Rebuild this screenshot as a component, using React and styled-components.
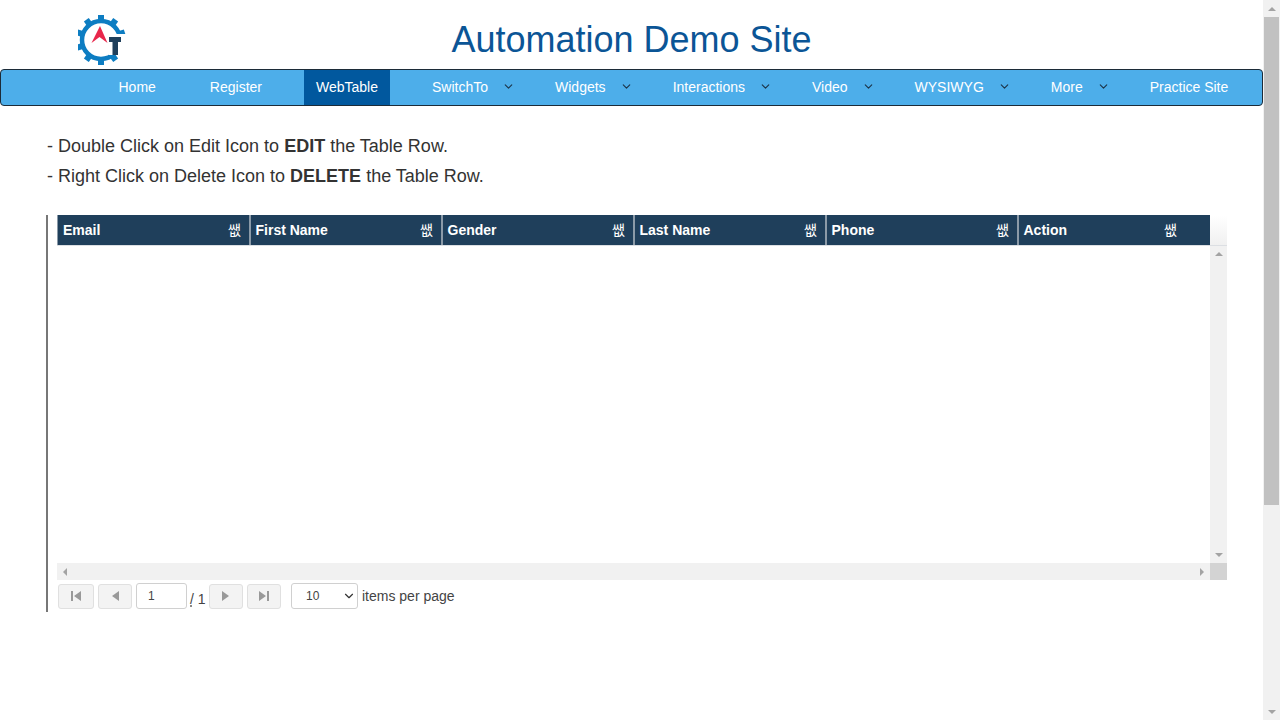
import React from "react";
import styled, { createGlobalStyle } from "styled-components";
import { ChevronDown } from "lucide-react";

const GlobalStyle = createGlobalStyle`
  html, body {
    margin: 0;
    padding: 0;
    height: 100%;
    overflow: hidden;
    background: #fff;
    font-family: "Liberation Sans", Arial, sans-serif;
  }
`;

const Shell = styled.div`
  display: flex;
  width: 1280px;
  height: 720px;
`;

const Page = styled.div`
  width: 1263px;
  flex-shrink: 0;
`;

const Masthead = styled.header`
  display: flex;
  height: 69px;
`;

const LogoBox = styled.div`
  width: 78px;
  padding-top: 14px;
  margin-left: 78px;
  margin-right: -156px;
`;

const SiteTitle = styled.h1`
  flex: 1;
  margin: 0;
  text-align: center;
  font-size: 36px;
  font-weight: 400;
  line-height: 79px;
  color: #0b5596;
`;

const NavBar = styled.nav`
  display: flex;
  gap: 30px;
  height: 37px;
  box-sizing: border-box;
  padding-left: 105px;
  background: #4daeea;
  border: 1px solid #1c2b38;
  border-radius: 4px;
`;

const NavItem = styled.a`
  display: flex;
  align-items: center;
  padding: 0 11.5px 2px 12.5px;
  font-size: 14px;
  color: #fff;
  background: ${(p) => (p.$active ? "#01589e" : "transparent")};
`;

const Caret = styled(ChevronDown)`
  width: 13px;
  height: 13px;
  margin-left: 14px;
  margin-right: -14px;
  color: #1c3347;
  stroke-width: 2;
`;

const Notes = styled.div`
  padding: 25px 0 0 47px;
  font-size: 18px;
  line-height: 30px;
  color: #333;
`;

const NoteLine = styled.div`
  white-space: nowrap;
`;

const TableArea = styled.section`
  margin: 24px 36px 0 46px;
  padding-left: 9px;
  border-left: 2px solid #777;
  height: 397px;
  box-sizing: border-box;
`;

const GridFrame = styled.div`
  display: grid;
  grid-template-columns: 1153px 17px;
  grid-template-rows: 30px 1px 317px 17px;
`;

const HeadRow = styled.div`
  display: flex;
  background: #1f3f5b;
  color: #fff;
`;

const HeadCell = styled.div`
  position: relative;
  display: flex;
  align-items: center;
  width: 192px;
  flex-shrink: 0;
  box-sizing: border-box;
  padding-left: 4.5px;
  border-left: 2px solid #8b9aa8;
  font-size: 14px;
  font-weight: 700;

  &:first-child {
    padding-left: 5px;
    border-left-width: 1px;
  }

  &:last-child {
    width: 193px;
  }
`;

const SortGlyph = styled.span`
  position: absolute;
  right: ${(p) => (p.$inset ? 33 : 8)}px;
  top: 5px;
  font-family: "Noto Sans CJK KR", sans-serif;
  font-size: 14px;
  font-weight: 400;
  line-height: 18px;
`;

const HeadFiller = styled.div`
  background: linear-gradient(#fff, #f0f0f0);
`;

const HeadRule = styled.div`
  grid-column: 1 / 3;
  background: #dcdfe3;
`;

const Body = styled.div`
  background: #fff;
`;

const ScrollTrack = styled.div`
  display: flex;
  flex-direction: ${(p) => (p.$horizontal ? "row" : "column")};
  align-items: center;
  justify-content: space-between;
  background: #f1f1f1;
`;

const ScrollCorner = styled.div`
  background: #d3d3d3;
`;

const Arrow = styled.span`
  width: 0;
  height: 0;
  flex-shrink: 0;
  border-style: solid;
  border-color: transparent;
  ${(p) =>
    p.$dir === "up" &&
    `border-width: 0 4px 4px; border-bottom-color: #a3a3a3; margin: 6px 0;`}
  ${(p) =>
    p.$dir === "down" &&
    `border-width: 4px 4px 0; border-top-color: #a3a3a3; margin: 6px 0;`}
  ${(p) =>
    p.$dir === "left" &&
    `border-width: 4px 4px 4px 0; border-right-color: #a3a3a3; margin: 0 6px;`}
  ${(p) =>
    p.$dir === "right" &&
    `border-width: 4px 0 4px 4px; border-left-color: #a3a3a3; margin: 0 6px;`}
`;

const Pager = styled.div`
  display: flex;
  align-items: center;
  height: 32px;
  padding-left: 1px;
  font-size: 14px;
  color: #444;
`;

const PageButton = styled.button`
  display: flex;
  align-items: center;
  justify-content: center;
  width: ${(p) => p.$w}px;
  height: 25px;
  margin-right: ${(p) => p.$gap}px;
  padding: 0;
  background: #f3f3f3;
  border: 1px solid #e0e0e0;
  border-radius: 3px;
`;

const PageIcon = styled.svg`
  width: 12px;
  height: 12px;
  fill: #999;
`;

const PageInput = styled.input`
  width: 51px;
  height: 26px;
  box-sizing: border-box;
  padding: 0 0 0 11px;
  border: 1px solid #d0d0d0;
  border-radius: 3px;
  font: 12px "Liberation Sans", Arial, sans-serif;
  color: #444;
`;

const PageCount = styled.span`
  position: relative;
  width: 22px;
  padding: 6px 0 0 3px;
  box-sizing: border-box;
  white-space: nowrap;

  &::after {
    content: "";
    position: absolute;
    left: 3px;
    bottom: 0;
    width: 2px;
    height: 2px;
    background: #888;
  }
`;

const SelectBox = styled.div`
  position: relative;
  width: 67px;
  height: 26px;
  margin: 0 4px 0 10px;
`;

const SizeSelect = styled.select`
  appearance: none;
  width: 100%;
  height: 100%;
  padding-left: 14px;
  background: #fff;
  border: 1px solid #d0d0d0;
  border-radius: 3px;
  font: 12px "Liberation Sans", Arial, sans-serif;
  color: #444;
`;

const SelectCaret = styled(ChevronDown)`
  position: absolute;
  right: 2px;
  top: 6px;
  width: 14px;
  height: 14px;
  color: #333;
  stroke-width: 2;
  pointer-events: none;
`;

const PageScrollbar = styled.aside`
  display: flex;
  flex-direction: column;
  width: 17px;
  height: 720px;
  background: #f1f1f1;
`;

const ScrollEnd = styled.div`
  display: flex;
  align-items: center;
  justify-content: center;
  height: 17px;
`;

const Thumb = styled.div`
  height: 488px;
  margin: 0 1px;
  background: #c1c1c1;
`;

const ThumbGap = styled.div`
  flex: 1;
`;

const navItems = [
  { label: "Home" },
  { label: "Register" },
  { label: "WebTable", active: true },
  { label: "SwitchTo", menu: true },
  { label: "Widgets", menu: true },
  { label: "Interactions", menu: true },
  { label: "Video", menu: true },
  { label: "WYSIWYG", menu: true },
  { label: "More", menu: true },
  { label: "Practice Site" },
];

const columns = ["Email", "First Name", "Gender", "Last Name", "Phone", "Action"];

function Logo() {
  const teeth = Array.from({ length: 10 }, (_, i) => i * 36);
  return (
    <svg width="50" height="52" viewBox="0 0 50 52">
      <circle cx="23" cy="26" r="19" fill="none" stroke="#0d7dc2" strokeWidth="4.5" />
      {teeth.map((deg) => (
        <rect
          key={deg}
          x="20"
          y="1"
          width="6"
          height="6"
          fill="#0d7dc2"
          transform={`rotate(${deg} 23 26)`}
        />
      ))}
      <rect x="31" y="20" width="19" height="21" fill="#fff" />
      <path d="M13.5 29 L22 12 L29.5 29 L21.5 23 Z" fill="#e8274b" />
      <path d="M31 23 H43 V28 H40 V41 H34.5 V28 H31 Z" fill="#1f3f5b" />
    </svg>
  );
}

function PagerIcon({ type }) {
  const paths = {
    first: "M1 1h2v10H1z M11 1v10L4 6z",
    prev: "M10 1v10L3 6z",
    next: "M2 1v10l7-5z",
    last: "M9 1h2v10H9z M1 1v10l7-5z",
  };
  return (
    <PageIcon viewBox="0 0 12 12">
      <path d={paths[type]} />
    </PageIcon>
  );
}

function App() {
  return (
    <Shell>
      <GlobalStyle />
      <Page>
        <Masthead>
          <LogoBox>
            <Logo />
          </LogoBox>
          <SiteTitle>Automation Demo Site</SiteTitle>
        </Masthead>

        <NavBar>
          {navItems.map((item) => (
            <NavItem key={item.label} $active={item.active}>
              {item.label}
              {item.menu && <Caret />}
            </NavItem>
          ))}
        </NavBar>

        <Notes>
          <NoteLine>
            - Double Click on Edit Icon to <b>EDIT</b> the Table Row.
          </NoteLine>
          <NoteLine>
            - Right Click on Delete Icon to <b>DELETE</b> the Table Row.
          </NoteLine>
        </Notes>

        <TableArea>
          <GridFrame>
            <HeadRow>
              {columns.map((name, i) => (
                <HeadCell key={name}>
                  {name}
                  <SortGlyph $inset={i === columns.length - 1}>쌦</SortGlyph>
                </HeadCell>
              ))}
            </HeadRow>
            <HeadFiller />
            <HeadRule />
            <Body />
            <ScrollTrack>
              <Arrow $dir="up" />
              <Arrow $dir="down" />
            </ScrollTrack>
            <ScrollTrack $horizontal>
              <Arrow $dir="left" />
              <Arrow $dir="right" />
            </ScrollTrack>
            <ScrollCorner />
          </GridFrame>

          <Pager>
            <PageButton $w={36} $gap={4}><PagerIcon type="first" /></PageButton>
            <PageButton $w={34} $gap={4}><PagerIcon type="prev" /></PageButton>
            <PageInput defaultValue="1" />
            <PageCount>/ 1</PageCount>
            <PageButton $w={34} $gap={4}><PagerIcon type="next" /></PageButton>
            <PageButton $w={34} $gap={0}><PagerIcon type="last" /></PageButton>
            <SelectBox>
              <SizeSelect defaultValue="10">
                <option>10</option>
                <option>20</option>
                <option>50</option>
              </SizeSelect>
              <SelectCaret />
            </SelectBox>
            items per page
          </Pager>
        </TableArea>
      </Page>

      <PageScrollbar>
        <ScrollEnd><Arrow $dir="up" /></ScrollEnd>
        <Thumb />
        <ThumbGap />
        <ScrollEnd><Arrow $dir="down" /></ScrollEnd>
      </PageScrollbar>
    </Shell>
  );
}

export default App;
